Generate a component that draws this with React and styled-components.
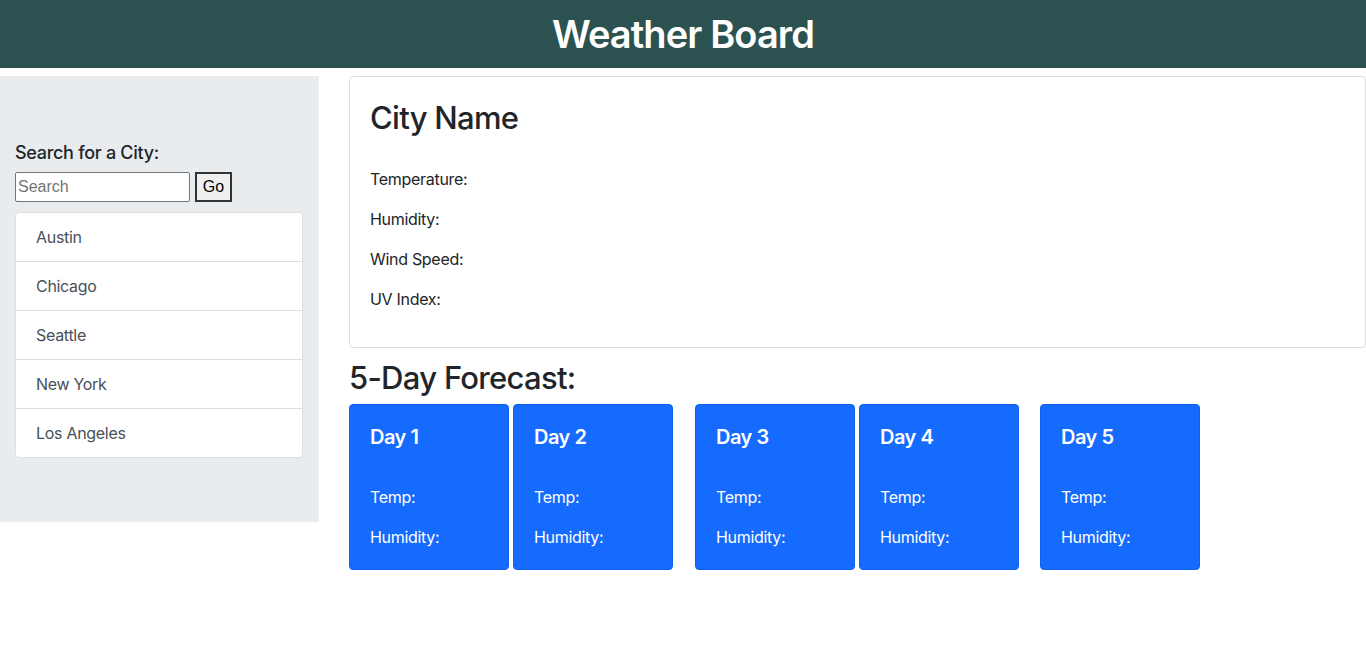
import styled, { createGlobalStyle } from "styled-components";

const GlobalStyle = createGlobalStyle`
  * {
    box-sizing: border-box;
  }
  body {
    margin: 0;
    font-family: Inter, "Noto Sans", sans-serif;
    font-size: 16px;
    line-height: 1.5;
    letter-spacing: -0.3px;
    color: #212529;
    background: #fff;
  }
`;

const cities = ["Austin", "Chicago", "Seattle", "New York", "Los Angeles"];

// odd gaps between forecast cards, as in the original layout
const days = [
  { label: "Day 1", gap: 0 },
  { label: "Day 2", gap: 4 },
  { label: "Day 3", gap: 22 },
  { label: "Day 4", gap: 4 },
  { label: "Day 5", gap: 21 },
];

const App = () => {
  return (
    <>
      <GlobalStyle />
      <Header>
        <h1>Weather Board</h1>
      </Header>
      <Layout>
        <Sidebar>
          <h5>Search for a City:</h5>
          <SearchRow>
            <input type="text" placeholder="Search" />
            <button>Go</button>
          </SearchRow>
          <CityList>
            {cities.map((city) => (
              <li key={city}>{city}</li>
            ))}
          </CityList>
        </Sidebar>
        <Main>
          <CurrentCard>
            <h2>City Name</h2>
            <p>Temperature:</p>
            <p>Humidity:</p>
            <p>Wind Speed:</p>
            <p>UV Index:</p>
          </CurrentCard>
          <ForecastTitle>5-Day Forecast:</ForecastTitle>
          <ForecastRow>
            {days.map((day) => (
              <DayCard key={day.label} $gap={day.gap}>
                <h5>{day.label}</h5>
                <p>Temp:</p>
                <p>Humidity:</p>
              </DayCard>
            ))}
          </ForecastRow>
        </Main>
      </Layout>
    </>
  );
};

const Header = styled.header`
  height: 68px;
  background-color: #2b5251;
  display: flex;
  align-items: center;
  justify-content: center;
  h1 {
    margin: 2px 0 0;
    color: #fff;
    font-size: 38px;
    font-weight: 600;
    line-height: 1.2;
    letter-spacing: -0.9px;
  }
`;

const Layout = styled.div`
  display: flex;
  align-items: flex-start;
  margin-top: 8px;
`;

const Sidebar = styled.aside`
  width: 319px;
  flex-shrink: 0;
  background-color: #e9ecef;
  padding: 65px 16px 64px 15px;
  h5 {
    margin: 0 0 7px;
    font-size: 18px;
    font-weight: 500;
    line-height: 24px;
  }
`;

const SearchRow = styled.div`
  display: flex;
  align-items: center;
  gap: 5px;
  input {
    width: 175px;
    height: 30px;
    padding: 1px 2px;
    border: 1px solid #767676;
    border-radius: 2px;
    font-family: "Liberation Sans", Arial, sans-serif;
    font-size: 16px;
    letter-spacing: 0;
    color: #000;
    background: #fff;
    &::placeholder {
      color: #757575;
    }
  }
  button {
    height: 30px;
    width: 37px;
    padding: 0;
    border: 2px solid #333;
    border-radius: 0;
    background: #efefef;
    font-family: "Liberation Sans", Arial, sans-serif;
    font-size: 16px;
    letter-spacing: 0;
    color: #000;
  }
`;

const CityList = styled.ul`
  list-style: none;
  margin: 10px 0 0;
  padding: 0;
  background: #fff;
  border: 1px solid #dfdfdf;
  border-radius: 4px;
  li {
    padding: 12px 20px;
    line-height: 24px;
    color: #495057;
    border-top: 1px solid #dfdfdf;
    &:first-child {
      border-top: 0;
    }
  }
`;

const Main = styled.main`
  flex: 1;
  margin-left: 30px;
  min-width: 0;
`;

const CurrentCard = styled.section`
  border: 1px solid #dfdfdf;
  border-radius: 4px;
  padding: 22px 20px 20px;
  h2 {
    margin: 0 0 30px;
    font-size: 31px;
    font-weight: 500;
    line-height: 38px;
    letter-spacing: -0.7px;
  }
  p {
    margin: 0 0 16px;
    line-height: 24px;
  }
`;

const ForecastTitle = styled.h2`
  margin: 11px 0 7px;
  font-size: 31px;
  font-weight: 500;
  line-height: 38px;
  letter-spacing: -0.7px;
`;

const ForecastRow = styled.div`
  display: flex;
`;

const DayCard = styled.div`
  width: 160px;
  height: 166px;
  margin-left: ${(p) => p.$gap}px;
  background-color: #156bfd;
  border: 1px solid #0f62f0;
  border-radius: 4px;
  padding: 20px;
  color: #fff;
  h5 {
    margin: 0 0 36px;
    font-size: 20px;
    font-weight: 600;
    line-height: 24px;
    letter-spacing: -0.5px;
  }
  p {
    margin: 0 0 16px;
    line-height: 24px;
    &:last-child {
      margin-bottom: 0;
    }
  }
`;

export default App;
